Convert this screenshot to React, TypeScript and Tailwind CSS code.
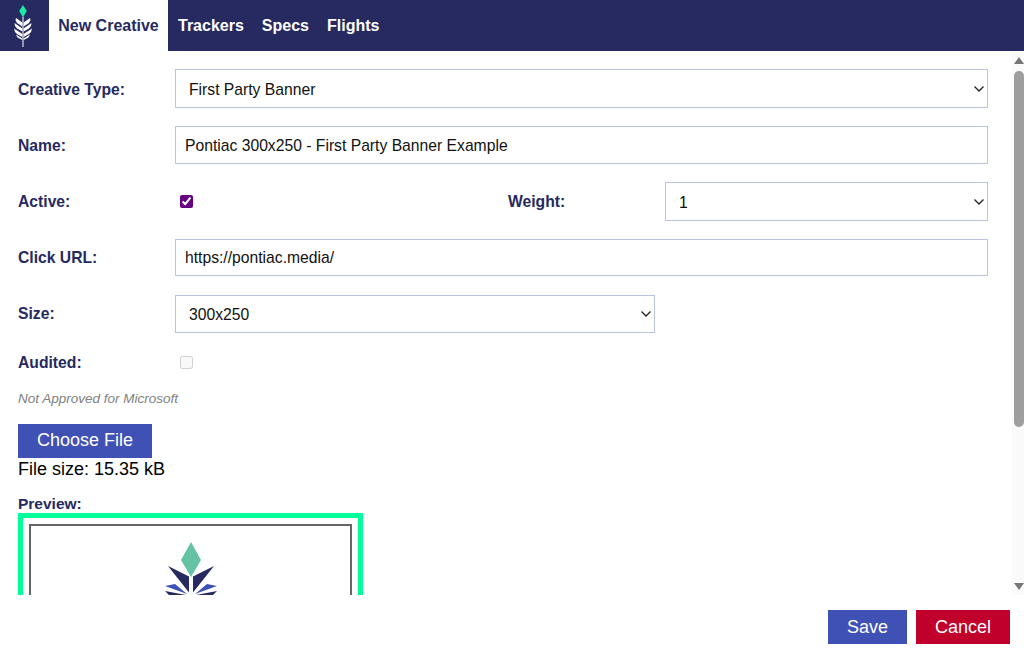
function Chevron() {
  return (
    <svg className="pointer-events-none absolute right-[3px] top-1/2 -translate-y-1/2" width="12" height="8" viewBox="0 0 12 8" fill="none">
      <path d="M1.500 1.500l4.500 4.500 4.500-4.500" stroke="#222" strokeWidth="1.300" />
    </svg>
  );
}

function Select({ value, className, height }: { value: string; className: string; height: string }) {
  return (
    <div className={`relative ${className}`}>
      <select className={`${height} w-full appearance-none border border-[#bcc3dc] bg-white pl-[13px] pt-[2px] text-[15.7px] text-[#111]`}>
        <option>{value}</option>
      </select>
      <Chevron />
    </div>
  );
}

export default function App() {
  const label = "w-[157px] shrink-0 text-[15.7px] font-bold text-[#262a61]";
  const field = "flex-1 border border-[#bcc3dc] bg-white px-[9px] text-[15.7px] text-[#111]";
  return (
    <div className="flex h-[654px] w-[1024px] flex-col overflow-hidden bg-white font-['Liberation_Sans',Arial,sans-serif]">
      <nav className="flex h-[51px] shrink-0 items-stretch bg-[#262a61]">
        <div className="flex w-[49px] items-center justify-center pr-[4px]">
          <svg width="20" height="42" viewBox="0 0 20 42">
            <path d="M10 0l3.800 6-3.800 6.500-3.800-6.500z" fill="#1de9a6" />
            <path d="M10 12v30" stroke="#fff" strokeWidth="1" />
            <g fill="#fff">
              <path d="M9.400 17.500L3 13l-.5 2 1.500 3 5.400 3.500z" />
              <path d="M10.600 17.500L17 13l.5 2-1.500 3-5.400 3.500z" />
              <path d="M9.400 23.500L1.500 18l.5 3 2 2.500 5.400 3z" />
              <path d="M10.600 23.500L18.500 18l-.5 3-2 2.500-5.400 3z" />
              <path d="M9.400 29L1 23.500l1 3.500 2 2 5.400 3z" />
              <path d="M10.600 29L19 23.500 18 27l-2 2-5.400 3z" />
              <path d="M9.400 33.500L3 29.500l1.500 3 4.900 2.500z" />
              <path d="M10.600 33.500l6.400-4-1.500 3-4.900 2.500z" />
            </g>
          </svg>
        </div>
        <a className="flex w-[119px] items-center justify-center bg-white text-[16px] font-bold text-[#262a61]">New Creative</a>
        <a className="ml-[10px] flex items-center text-[16px] font-bold text-white">Trackers</a>
        <a className="ml-[18px] flex items-center text-[16px] font-bold text-white">Specs</a>
        <a className="ml-[18px] flex items-center text-[16px] font-bold text-white">Flights</a>
      </nav>

      <div className="flex h-[544px] shrink-0">
        <main className="flex-1 overflow-hidden">
          <div className="flex w-[988px] flex-col pl-[18px] pt-[18px]">
            <div className="flex items-center">
              <label className={`${label} pt-[2px]`}>Creative Type:</label>
              <Select value="First Party Banner" className="flex-1" height="h-[39px]" />
            </div>
            <div className="mt-[18px] flex items-center">
              <label className={`${label} pt-[2px]`}>Name:</label>
              <input className={`h-[38px] pt-[2px] ${field}`} defaultValue="Pontiac 300x250 - First Party Banner Example" />
            </div>
            <div className="mt-[18px] flex items-center">
              <label className={label}>Active:</label>
              <div className="flex w-[333px] items-center">
                <input type="checkbox" defaultChecked className="ml-[5px] accent-[#660080]" />
              </div>
              <label className={label}>Weight:</label>
              <Select value="1" className="flex-1" height="h-[39px]" />
            </div>
            <div className="mt-[18px] flex items-center">
              <label className={label}>Click URL:</label>
              <input className={`h-[37px] ${field}`} defaultValue="https://pontiac.media/" />
            </div>
            <div className="mt-[19px] flex items-center">
              <label className={label}>Size:</label>
              <Select value="300x250" className="w-[480px]" height="h-[38px]" />
            </div>
            <div className="mt-[18px] flex items-center">
              <label className={label}>Audited:</label>
              <input type="checkbox" disabled className="ml-[5px]" />
            </div>
            <p className="mt-[15px] text-[13.500px] italic leading-[18px] text-[#808080]">Not Approved for Microsoft</p>
            <button className="mt-[16px] h-[34px] w-[134px] bg-[#3f51b5] text-[18px] text-white">Choose File</button>
            <p className="text-[18px] leading-[22px] text-black">File size: 15.35 kB</p>
            <p className="mt-[15px] text-[15.500px] font-bold leading-[18px] text-[#262a61]">Preview:</p>
            <div className="h-[300px] w-[345px] border-[5px] border-[#00ff99] bg-white p-[6px]">
              <div className="flex h-full flex-col items-center border-2 border-[#666666] pt-[16px]">
                <svg width="58" height="70" viewBox="0 0 58 70">
                  <path d="M29 0l10 18-10 17-10-17z" fill="#66c2a5" />
                  <path d="M6 24l20 10 1 .5v16z" fill="#262a61" />
                  <path d="M52 24L32 34l-1 .5v16z" fill="#262a61" />
                  <path d="M3 44l10-2 12 10z" fill="#3f51b5" />
                  <path d="M55 44l-10-2-12 10z" fill="#3f51b5" />
                  <path d="M3 49l21 4-11 6z" fill="#262a61" />
                  <path d="M55 49l-21 4 11 6z" fill="#262a61" />
                </svg>
              </div>
            </div>
          </div>
        </main>
        <aside className="relative w-[12px] shrink-0 bg-[#fafafa]">
          <div className="absolute left-[2px] top-[6px] h-0 w-0 border-x-[5px] border-b-[7px] border-x-transparent border-b-[#777]" />
          <div className="absolute left-[2px] top-[20px] h-[356px] w-[10px] rounded-[5px] bg-[#9e9e9e]" />
          <div className="absolute bottom-[5px] left-[2px] h-0 w-0 border-x-[5px] border-t-[7px] border-x-transparent border-t-[#777]" />
        </aside>
      </div>

      <footer className="flex flex-1 items-start justify-end gap-[9px] pr-[14px] pt-[15px]">
        <button className="h-[34px] w-[79px] bg-[#3f51b5] text-[18px] text-white">Save</button>
        <button className="h-[34px] w-[94px] bg-[#c0002b] text-[18px] text-white">Cancel</button>
      </footer>
    </div>
  );
}
